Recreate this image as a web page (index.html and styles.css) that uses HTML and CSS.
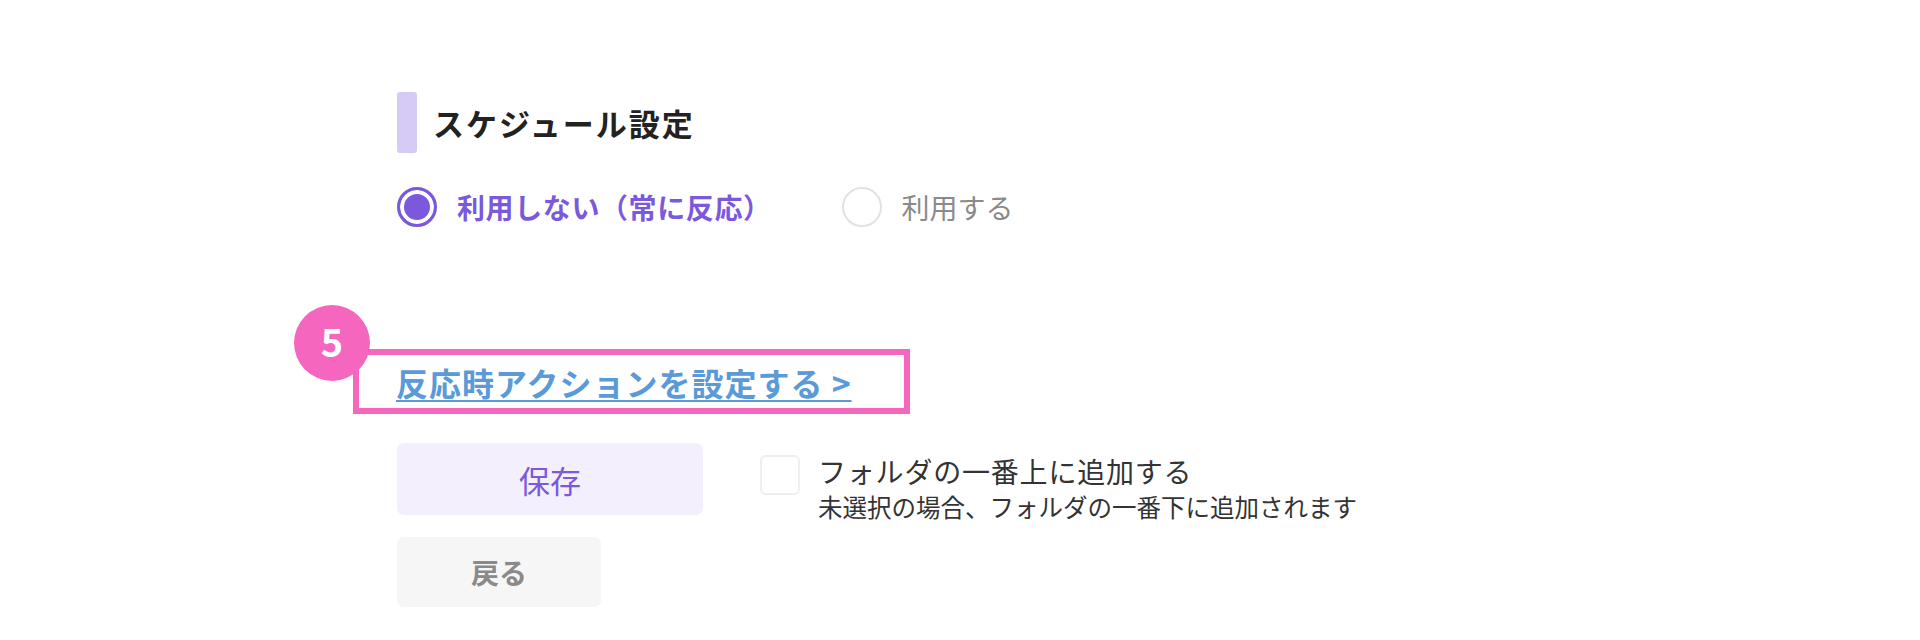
FILE: index.html
```html
<!DOCTYPE html>
<html lang="ja">
<head>
    <meta charset="UTF-8">
    <meta name="viewport" content="width=device-width, initial-scale=1.0">
    <title>スケジュール設定</title>
    <link rel="stylesheet" href="styles.css">
</head>
<body>
    <main class="page">
        <section class="schedule">
            <h2 class="section-title"><span class="title-bar"></span>スケジュール設定</h2>
            <div class="radio-group">
                <label class="radio checked">
                    <span class="radio-mark"></span>
                    <span class="radio-text">利用しない（常に反応）</span>
                </label>
                <label class="radio">
                    <span class="radio-mark"></span>
                    <span class="radio-text">利用する</span>
                </label>
            </div>
        </section>

        <div class="action-box">
            <span class="step-badge">5</span>
            <a href="#" class="action-link">反応時アクションを設定する &gt;</a>
        </div>

        <div class="form-actions">
            <div class="buttons">
                <button class="btn btn-save">保存</button>
                <button class="btn btn-back">戻る</button>
            </div>
            <label class="check">
                <span class="check-box"></span>
                <span class="check-text">
                    <span class="check-label">フォルダの一番上に追加する</span>
                    <span class="check-note">未選択の場合、フォルダの一番下に追加されます</span>
                </span>
            </label>
        </div>
    </main>
</body>
</html>
```

FILE: styles.css
```css
/* Couleurs */
:root {
  --purple: #7a59dc;
  --purple-light: #f3effd;
  --bar: #d6cbf6;
  --pink: #f566bf;
  --link: #5a9ad8;
  --text: #222;
  --muted: #8a8a8a;
}
body {
  margin: 0;
  background: #fff;
  color: var(--text);
  font-family: "Noto Sans CJK JP", "Noto Sans", sans-serif;
}
.page {
  padding: 92px 0 0 397px;
}
.section-title {
  display: flex;
  align-items: center;
  margin: 0;
  font-size: 31px;
  font-weight: bold;
  line-height: 61px;
  letter-spacing: 2px;
}
.title-bar {
  width: 20px;
  height: 61px;
  border-radius: 3px;
  background: var(--bar);
  margin-right: 16px;
}
.radio-group {
  display: flex;
  align-items: center;
  margin-top: 34px;
  height: 40px;
}
.radio {
  display: flex;
  align-items: center;
  gap: 20px;
  font-size: 28px;
  line-height: 40px;
  color: var(--muted);
  margin-right: 70px;
}
.radio-mark {
  box-sizing: border-box;
  width: 40px;
  height: 40px;
  border-radius: 50%;
  border: 2px solid #e2e2e2;
  background: #fff;
}
.radio.checked {
  color: var(--purple);
  font-weight: bold;
  letter-spacing: 0.6px;
}
.radio.checked .radio-mark {
  border: 3px solid var(--purple);
  box-shadow: inset 0 0 0 4px #fff;
  background: var(--purple);
}
.action-box {
  position: relative;
  box-sizing: border-box;
  display: flex;
  align-items: center;
  width: 557px;
  height: 65px;
  margin: 122px 0 0 -44px;
  padding-left: 37px;
  border: 6px solid var(--pink);
}
.step-badge {
  position: absolute;
  left: -65px;
  top: -50px;
  width: 76px;
  height: 76px;
  border-radius: 50%;
  background: var(--pink);
  color: #fff;
  font-size: 38px;
  font-weight: bold;
  line-height: 72px;
  text-align: center;
}
.action-link {
  color: var(--link);
  font-size: 32px;
  font-weight: bold;
  line-height: 40px;
  letter-spacing: 1px;
  text-decoration: underline;
  text-decoration-thickness: 2px;
  text-underline-offset: 4px;
}
.form-actions {
  display: flex;
  align-items: flex-start;
  gap: 57px;
  margin-top: 29px;
}
.buttons {
  display: flex;
  flex-direction: column;
  align-items: flex-start;
  gap: 22px;
}
.btn {
  border: none;
  border-radius: 7px;
  font-family: inherit;
  cursor: pointer;
}
.btn-save {
  width: 306px;
  height: 72px;
  background: var(--purple-light);
  color: var(--purple);
  font-size: 31px;
}
.btn-back {
  width: 204px;
  height: 70px;
  background: #f6f6f6;
  color: var(--muted);
  font-size: 28px;
  font-weight: bold;
}
.check {
  display: flex;
  align-items: flex-start;
  gap: 18px;
  margin-top: 12px;
}
.check-box {
  box-sizing: border-box;
  width: 40px;
  height: 40px;
  border: 2px solid #eee;
  border-radius: 6px;
}
.check-text {
  display: flex;
  flex-direction: column;
  color: #333;
}
.check-label {
  font-size: 28px;
  line-height: 32px;
  letter-spacing: 0.8px;
}
.check-note {
  font-size: 24.5px;
  line-height: 40px;
}
```
